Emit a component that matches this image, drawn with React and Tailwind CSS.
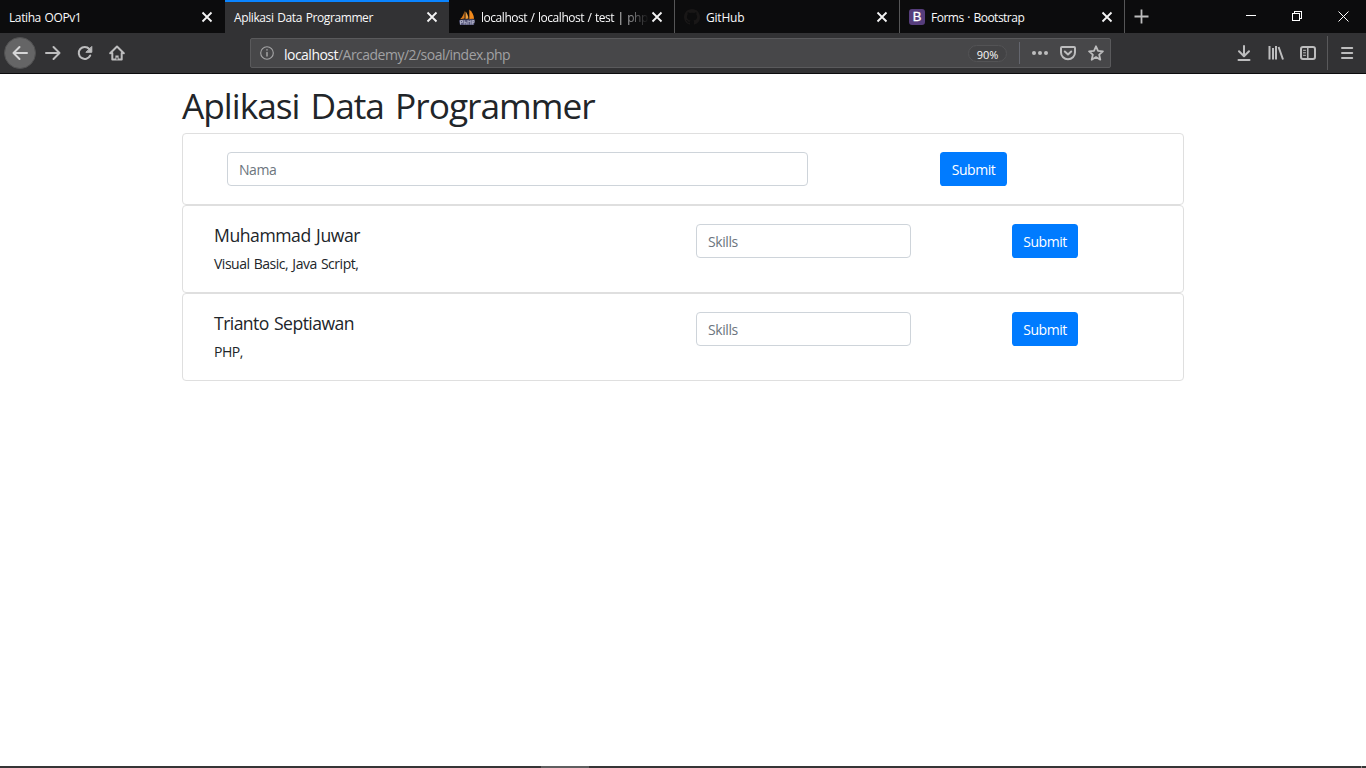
const TabClose = () => (
  <svg className="h-3 w-3 shrink-0" viewBox="0 0 12 12" fill="none" stroke="#f4f4f5" strokeWidth="1.8">
    <path d="M1.500 1.500l9 9M10.500 1.500l-9 9" />
  </svg>
);

const SailIcon = () => (
  <svg className="h-4 w-4 shrink-0" viewBox="0 0 16 16">
    <path d="M5.600 1.500C5 5 3.600 8 1 10.300L5.600 9.500Z" fill="#d97a1c" />
    <path d="M6.500 2.500v7.500l3-.5C9 6.500 8 4 6.500 2.500Z" fill="#f0a040" />
    <path d="M10.300.5v9.500l4.800-.3C14.800 6 13 2.500 10.300.5Z" fill="#f28a1c" />
    <path d="M0 11.500c3-1.200 5-.8 8-1 3-.2 5-.5 8 .2l-1 5.300H1Z" fill="#55567a" />
    <path d="M1.500 15.500v-4h2v2.200h-2M5.200 11.200v4.300M5.200 13.300h2v2.200M9 15.500v-4l1.400 1.500 1.400-1.500v4M13.300 15.500v-4h1.700v2.200h-1.700" fill="none" stroke="#b4b5cc" strokeWidth=".9" />
  </svg>
);

const GithubIcon = () => (
  <svg className="h-4 w-4 shrink-0" viewBox="0 0 16 16" fill="#191717">
    <path d="M8 0C3.580 0 0 3.580 0 8c0 3.540 2.290 6.530 5.470 7.590.4.070.55-.17.55-.38 0-.19-.010-.82-.010-1.490-2.010.37-2.530-.49-2.690-.94-.090-.23-.48-.94-.82-1.130-.28-.15-.68-.52-.010-.53.63-.010 1.080.58 1.230.82.72 1.210 1.870.87 2.330.66.070-.52.28-.87.510-1.070-1.780-.2-3.640-.89-3.640-3.950 0-.87.310-1.590.82-2.150-.080-.2-.36-1.020.080-2.120 0 0 .67-.21 2.200.82.64-.18 1.320-.27 2-.27s1.360.090 2 .27c1.530-1.040 2.200-.82 2.200-.82.44 1.100.16 1.920.080 2.120.51.56.82 1.270.82 2.150 0 3.070-1.870 3.750-3.650 3.950.29.25.54.73.54 1.480 0 1.070-.010 1.930-.010 2.200 0 .21.15.46.55.38A8.010 8.010 0 0 0 16 8c0-4.420-3.580-8-8-8Z" />
  </svg>
);

const BootstrapIcon = () => (
  <span className="flex h-4 w-4 shrink-0 items-center justify-center rounded-[3px] bg-[#563d7c] font-['Liberation_Sans',sans-serif] text-[13px] leading-4 text-white [-webkit-text-stroke:0.3px_white]">B</span>
);

const Icon = ({ children, className = "h-4 w-4" }) => (
  <svg
    className={className + " shrink-0"}
    viewBox="0 0 16 16"
    fill="none"
    stroke="#bdbdbe"
    strokeWidth="2"
    strokeLinecap="round"
    strokeLinejoin="round"
  >
    {children}
  </svg>
);

const NavButton = ({ children, className = "" }) => (
  <button className={"flex h-8 w-8 shrink-0 items-center justify-center " + className}>{children}</button>
);

function Tab({ title, icon, active, spacing, divider, className = "w-[225px] pl-[9px] pr-3" }) {
  return (
    <div
      className={
        "flex h-full shrink-0 items-center " +
        className +
        (active ? " border-t-2 border-[#0a84ff] bg-[#323234] pb-0.5" : "") +
        (divider ? " border-r border-[#565657]" : "")
      }
    >
      {icon && <span className="mr-1.5 flex">{icon}</span>}
      <span className="min-w-0 flex-1 pt-0.5">
        <span className={"block whitespace-nowrap text-[12px] leading-[18px] text-[#f9f9fa] " + spacing}>{title}</span>
      </span>
      <TabClose />
    </div>
  );
}

function Field({ placeholder, className }) {
  return (
    <input
      placeholder={placeholder}
      className={
        "h-[34px] shrink-0 rounded-[4px] border border-[#ced4da] bg-white px-[11px] text-[14px] tracking-[-0.42px] outline-none placeholder:text-[#6c757d] " +
        className
      }
    />
  );
}

function Submit({ className }) {
  return (
    <button
      className={
        "h-[34px] shrink-0 rounded-[3.600px] bg-[#007bff] text-center text-[14px] tracking-[-0.45px] text-white " + className
      }
    >
      Submit
    </button>
  );
}

function Programmer({ name, skills, spacing }) {
  return (
    <div className="flex h-[88px] items-start rounded-[4px] border border-[#dfdfdf] pt-[18px]">
      <div className="ml-[31px] w-[482px] shrink-0 text-[#212529]">
        <h5 className={"text-[17.600px] leading-[22px] " + spacing}>{name}</h5>
        <p className="mt-[7px] text-[14px] leading-[22px] tracking-[-0.48px] [word-spacing:1px]">{skills}</p>
      </div>
      <Field placeholder="Skills" className="w-[215px]" />
      <Submit className="ml-[101px] w-[66px]" />
    </div>
  );
}

export default function App() {
  return (
    <div className="flex h-[768px] w-[1366px] flex-col overflow-hidden bg-white font-['Open_Sans',sans-serif]">
      <div className="flex h-[33px] shrink-0 bg-[#0c0c0d]">
        <Tab title="Latiha OOPv1" spacing="tracking-[-0.4px] [word-spacing:1px]" />
        <Tab title="Aplikasi Data Programmer" active spacing="tracking-[-0.4px] [word-spacing:1px]" className="w-[224px] pl-[9px] pr-[11px]" />
        <Tab
          icon={<SailIcon />}
          title="localhost / localhost / test | php"
          spacing="tracking-[-0.46px] [word-spacing:0.8px] [mask-image:linear-gradient(to_right,black_134px,transparent_168px)]"
          divider
          className="w-[226px] pl-[10px] pr-[11px]"
        />
        <Tab icon={<GithubIcon />} title="GitHub" spacing="tracking-[-0.2px]" divider className="w-[225px] pl-[9px] pr-[11px]" />
        <Tab icon={<BootstrapIcon />} title="Forms · Bootstrap" spacing="tracking-[-0.51px] [word-spacing:1px]" divider className="w-[225px] pl-[9px] pr-[11px]" />
        <div className="flex w-8 items-center justify-center">
          <svg className="h-[15px] w-[15px]" viewBox="0 0 15 15" stroke="#bdbdbe" strokeWidth="1.800">
            <path d="M7.500.5v14M.5 7.500h14" />
          </svg>
        </div>
        <div className="ml-auto flex items-center">
          <div className="flex w-[46px] justify-center pr-0.5">
            <svg className="h-[11px] w-[11px]" viewBox="0 0 11 11" stroke="#fff" shapeRendering="crispEdges"><path d="M.5 4.500h10" /></svg>
          </div>
          <div className="flex w-[46px] justify-center">
            <svg className="h-[11px] w-[11px]" viewBox="0 0 11 11" fill="none" stroke="#fff" shapeRendering="crispEdges"><path d="M.5 2.500h7v7h-7zM2.500 2.500v-2h7v7h-2" /></svg>
          </div>
          <div className="flex w-[46px] justify-center">
            <svg className="h-[11px] w-[11px]" viewBox="0 0 11 11" stroke="#fff"><path d="M.5.5l10 10M10.500.5l-10 10" /></svg>
          </div>
        </div>
      </div>

      <div className="flex h-[41px] shrink-0 items-center border-b border-[#0c0c0d] bg-[#323234] pl-1">
        <NavButton className="rounded-full border border-[#505051] bg-[#656566]">
          <Icon><path d="M15 8H1.500M7.500 2L1.500 8l6 6" stroke="#d6d6d7" /></Icon>
        </NavButton>
        <NavButton className="ml-px"><Icon><path d="M1 8h13.500M8.500 2l6 6-6 6" /></Icon></NavButton>
        <NavButton>
          <Icon><path d="M13.200 10.500A6 6 0 1 1 12.300 4" /><path d="M14.800 1.800v5.500h-5.500z" fill="#bdbdbe" strokeWidth="1" /></Icon>
        </NavButton>
        <NavButton>
          <Icon><path d="M1.200 8.200L8 1.500l6.800 6.700M3.300 8v6.500h9.400V8" /><path d="M8 14.500v-4" strokeLinecap="butt" strokeWidth="3.200" /><path d="M8 14.500v-2" strokeLinecap="butt" stroke="#323234" strokeWidth="1.200" /></Icon>
        </NavButton>

        <div className="ml-[117px] flex h-[30px] w-[861px] shrink-0 items-center rounded-[2px] border border-[#5a5a5c] bg-[#474749] pl-[9px]">
          <Icon className="h-[14px] w-[14px]">
            <circle cx="8" cy="8" r="7.200" strokeWidth="1.300" stroke="#a5a5a6" />
            <path d="M8 7.500v4M8 4.300v.4" strokeWidth="1.700" stroke="#a5a5a6" />
          </Icon>
          <span className="ml-[10px] mt-[3px] whitespace-pre text-[14px] leading-5 tracking-[-0.52px] text-[#a1a1a3]">
            <span className="text-[#f9f9fa]">localhost</span>/Arcademy/2/soal/index.php
          </span>
          <span className="ml-auto mr-[12px] flex h-[17px] w-[39px] items-center justify-center rounded-full border border-[#535355] bg-[#434345] pt-0.5 text-[11px] leading-[15px] tracking-[-0.1px] text-[#f9f9fa]">90%</span>
          <span className="mr-[12px] h-[22px] w-px bg-[#64666e]" />
          <Icon><g fill="#bdbdbe" stroke="none"><circle cx="2" cy="8" r="2" /><circle cx="8" cy="8" r="2" /><circle cx="14" cy="8" r="2" /></g></Icon>
          <Icon className="ml-3 h-4 w-4"><path d="M2 2h12a1 1 0 0 1 1 1v4.500a7 6.700 0 0 1-14 0V3a1 1 0 0 1 1-1z" /><path d="M4.800 6.500L8 9.500l3.200-3" /></Icon>
          <Icon className="ml-3 mr-[6px] h-4 w-4"><path d="M8 1.300l2 4.600 4.900.5-3.700 3.300 1.100 5L8 12.100l-4.300 2.600 1.100-5L1.100 6.400 6 5.900z" strokeWidth="1.800" /></Icon>
        </div>

        <div className="ml-auto flex items-center pr-[3px]">
          <NavButton><Icon><path d="M8 1v9.500M3 6.300l5 4.900 5-4.900M2.500 15h11" /></Icon></NavButton>
          <NavButton><Icon><path d="M1.500 1v13.500M5 3v11.500M8 1v13.500M10.600 2l4.400 12.500" strokeWidth="2" strokeLinecap="butt" /></Icon></NavButton>
          <NavButton><Icon><rect x="1" y="2" width="14" height="12" rx="2" /><path d="M7.800 2v12" strokeWidth="1.500" /><path d="M3.500 5.300h2M3.500 7.800h2M3.500 10.300h2" strokeWidth="1" /></Icon></NavButton>
          <span className="ml-[3px] mr-[3px] h-[34px] w-px bg-[#59595b]" />
          <NavButton><Icon><path d="M3 3h10.200M3 8h10.200M3 13h10.200" /></Icon></NavButton>
        </div>
      </div>

      <main className="mx-auto w-[1002px] flex-1 pt-[10px]">
        <h1 className="mb-[6px] h-[43px] whitespace-nowrap text-[35.300px] leading-[43px] tracking-[-1.02px] text-[#212529] [word-spacing:3px]">Aplikasi Data Programmer</h1>
        <div className="flex h-[72px] items-start rounded-[4px] border border-[#dfdfdf] pt-[18px]">
          <Field placeholder="Nama" className="ml-[44px] w-[581px]" />
          <Submit className="ml-[132px] w-[67px]" />
        </div>
        <Programmer name="Muhammad Juwar" skills="Visual Basic, Java Script," spacing="tracking-[-0.44px] [word-spacing:1.200px]" />
        <Programmer name="Trianto Septiawan" skills="PHP," spacing="tracking-[-0.56px] [word-spacing:1.200px]" />
      </main>

      <div className="flex h-0.5 shrink-0 bg-[#363536]">
        <span className="ml-[541px] w-12 bg-[#5f5f60]" />
        <span className="ml-auto mr-1 w-px bg-[#8a8a8a]" />
      </div>
    </div>
  );
}
